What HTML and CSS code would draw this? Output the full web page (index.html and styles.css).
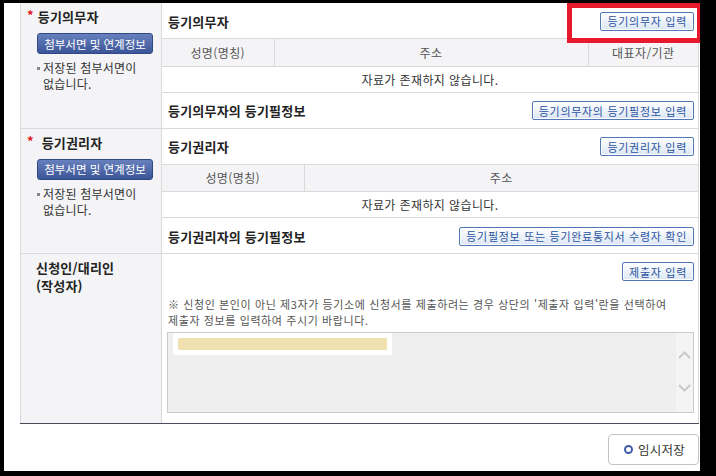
FILE: index.html
```html
<!DOCTYPE html>
<html lang="ko">
<head>
  <meta charset="UTF-8">
  <meta name="viewport" content="width=device-width, initial-scale=1.0">
  <title>등기신청서 작성</title>
  <link rel="stylesheet" href="styles.css">
</head>
<body>
  <div class="screen">
    <div class="form">
      <div class="row">
        <div class="label">
          <h3 class="label-title"><span class="req">*</span>등기의무자</h3>
          <button class="btn-attach">첨부서면 및 연계정보</button>
          <p class="attach-note">저장된 첨부서면이<br>없습니다.</p>
        </div>
        <div class="content">
          <div class="bar">
            <h4>등기의무자</h4>
            <button class="btn-sm">등기의무자 입력</button>
          </div>
          <table class="list">
            <colgroup><col style="width:112px"><col><col style="width:110px"></colgroup>
            <thead>
              <tr><th>성명(명칭)</th><th>주소</th><th>대표자/기관</th></tr>
            </thead>
            <tbody>
              <tr><td colspan="3">자료가 존재하지 않습니다.</td></tr>
            </tbody>
          </table>
          <div class="bar bar-last">
            <h4>등기의무자의 등기필정보</h4>
            <button class="btn-sm">등기의무자의 등기필정보 입력</button>
          </div>
        </div>
      </div>

      <div class="row">
        <div class="label">
          <h3 class="label-title"><span class="req">*</span> 등기권리자</h3>
          <button class="btn-attach">첨부서면 및 연계정보</button>
          <p class="attach-note">저장된 첨부서면이<br>없습니다.</p>
        </div>
        <div class="content">
          <div class="bar">
            <h4>등기권리자</h4>
            <button class="btn-sm">등기권리자 입력</button>
          </div>
          <table class="list">
            <colgroup><col style="width:142px"><col></colgroup>
            <thead>
              <tr><th>성명(명칭)</th><th>주소</th></tr>
            </thead>
            <tbody>
              <tr><td colspan="2">자료가 존재하지 않습니다.</td></tr>
            </tbody>
          </table>
          <div class="bar bar-last">
            <h4>등기권리자의 등기필정보</h4>
            <button class="btn-sm">등기필정보 또는 등기완료통지서 수령자 확인</button>
          </div>
        </div>
      </div>

      <div class="row row-last">
        <div class="label">
          <h3 class="label-title label-plain">신청인/대리인<br>(작성자)</h3>
        </div>
        <div class="content content-pad">
          <div class="tool">
            <button class="btn-sm">제출자 입력</button>
          </div>
          <p class="notice">※ 신청인 본인이 아닌 제3자가 등기소에 신청서를 제출하려는 경우 상단의 '제출자 입력'란을 선택하여<br>제출자 정보를 입력하여 주시기 바랍니다.</p>
          <div class="memo">
            <div class="memo-body">
              <div class="memo-line"><span class="memo-mark"></span></div>
            </div>
            <div class="memo-scroll">
              <svg width="13" height="8" viewBox="0 0 13 8"><path d="M1 7 L6.5 1.5 L12 7" fill="none" stroke="#c9c9c9" stroke-width="2"/></svg>
              <svg width="13" height="8" viewBox="0 0 13 8"><path d="M1 1 L6.5 6.5 L12 1" fill="none" stroke="#c9c9c9" stroke-width="2"/></svg>
            </div>
          </div>
        </div>
      </div>
    </div>

    <div class="actions">
      <button class="btn-save"><span class="ring"></span>임시저장</button>
    </div>

    <div class="highlight"></div>
  </div>
</body>
</html>
```

FILE: styles.css
```css
* { box-sizing: border-box; }
html, body {
  margin: 0;
  background: #000;
}
body {
  font-family: "Noto Sans CJK KR", "Noto Sans", sans-serif;
  font-size: 12px;
  color: #333;
}
.screen {
  position: relative;
  width: 696px;
  height: 468px;
  margin: 3px 0 0 4px;
  background: #fff;
  overflow: hidden;
}
.form {
  width: 679px;
  margin-left: 16px;
  border-bottom: 1px solid #4b4b5b;
}
.row {
  display: flex;
  border-bottom: 1px solid #dadada;
}
.row-last { border-bottom: none; }
.label {
  width: 142px;
  flex-shrink: 0;
  background: #f4f4f6;
  border-left: 1px solid #dadada;
  border-right: 1px solid #dadada;
  padding: 5px 0 0 6px;
}
.label-title {
  margin: 0;
  font-size: 13px;
  line-height: 18px;
  font-weight: bold;
  color: #222;
  letter-spacing: 0.2px;
}
.label-plain {
  padding: 0 0 0 9px;
}
.req {
  color: #e0141e;
  margin-right: 4px;
  position: relative;
  top: -2px;
}
.btn-attach {
  display: block;
  width: 116px;
  height: 21px;
  margin: 7px 0 0 10px;
  padding: 0;
  border: 1px solid #2f4886;
  border-radius: 3px;
  background: linear-gradient(#6780bd, #3c5598);
  color: #fff;
  font-family: inherit;
  font-size: 11.5px;
  line-height: 18px;
}
.attach-note {
  position: relative;
  margin: 6px 0 0 10px;
  padding-left: 6px;
  line-height: 16px;
  color: #333;
  letter-spacing: 0.2px;
}
.attach-note::before {
  content: "";
  position: absolute;
  left: 0;
  top: 7px;
  width: 3px;
  height: 3px;
  background: #888;
}
.content {
  flex: 1;
  border-right: 1px solid #dadada;
}
.bar {
  display: flex;
  align-items: center;
  justify-content: space-between;
  height: 36px;
  padding: 1px 4px 0 6px;
  border-bottom: 1px solid #dadada;
}
.bar-last {
  height: 35px;
  border-bottom: none;
}
.bar h4 {
  margin: 0;
  font-size: 13px;
  font-weight: bold;
  color: #222;
  letter-spacing: 0.2px;
}
.btn-sm {
  height: 19px;
  padding: 0 6px;
  border: 1px solid #5077b6;
  border-radius: 2px;
  background: linear-gradient(#ffffff, #dbe6f4);
  box-shadow: inset 0 0 0 1px #fff;
  color: #2c54a0;
  font-family: inherit;
  font-size: 11px;
  line-height: 16px;
  letter-spacing: 0.7px;
  white-space: nowrap;
}
.list {
  width: 100%;
  border-collapse: collapse;
  table-layout: fixed;
}
.list th, .list td {
  height: 26px;
  padding: 0;
  border-bottom: 1px solid #dadada;
  text-align: center;
  font-weight: normal;
  letter-spacing: 0.4px;
}
.list th {
  height: 27px;
  background: #f4f4f6;
  color: #555;
  border-right: 1px solid #dadada;
}
.list th:last-child { border-right: none; }
.list td { color: #333; }
.content-pad {
  padding: 8px 4px 10px 5px;
}
.tool {
  display: flex;
  justify-content: flex-end;
}
.notice {
  margin: 15px 0 0 1px;
  font-size: 11px;
  line-height: 16px;
  color: #555;
  letter-spacing: 0.6px;
  white-space: nowrap;
}
.memo {
  display: flex;
  height: 81px;
  margin-top: 4px;
  border: 1px solid #cbcbcb;
  background: #efefef;
}
.memo-body {
  flex: 1;
  padding-left: 5px;
}
.memo-line {
  width: 219px;
  padding: 5px;
  background: #fff;
}
.memo-mark {
  display: block;
  height: 12px;
  background: #efe2b0;
}
.memo-scroll {
  width: 17px;
  display: flex;
  flex-direction: column;
  align-items: center;
  gap: 25px;
  padding-top: 18px;
  background: #f4f4f4;
}
.actions {
  width: 679px;
  margin-left: 16px;
  padding-top: 10px;
  display: flex;
  justify-content: flex-end;
}
.btn-save {
  display: flex;
  align-items: center;
  justify-content: center;
  gap: 5px;
  width: 91px;
  height: 31px;
  padding: 0 0 0 2px;
  border: 1px solid #c3c3c3;
  border-radius: 4px;
  background: #fff;
  color: #333;
  font-family: inherit;
  font-size: 12.5px;
  letter-spacing: 0.3px;
}
.ring {
  width: 9px;
  height: 9px;
  border: 2.5px solid #3d5daa;
  border-radius: 50%;
}
.highlight {
  position: absolute;
  left: 563px;
  top: 0;
  width: 135px;
  height: 40px;
  border: 5px solid #e8192c;
}
```
